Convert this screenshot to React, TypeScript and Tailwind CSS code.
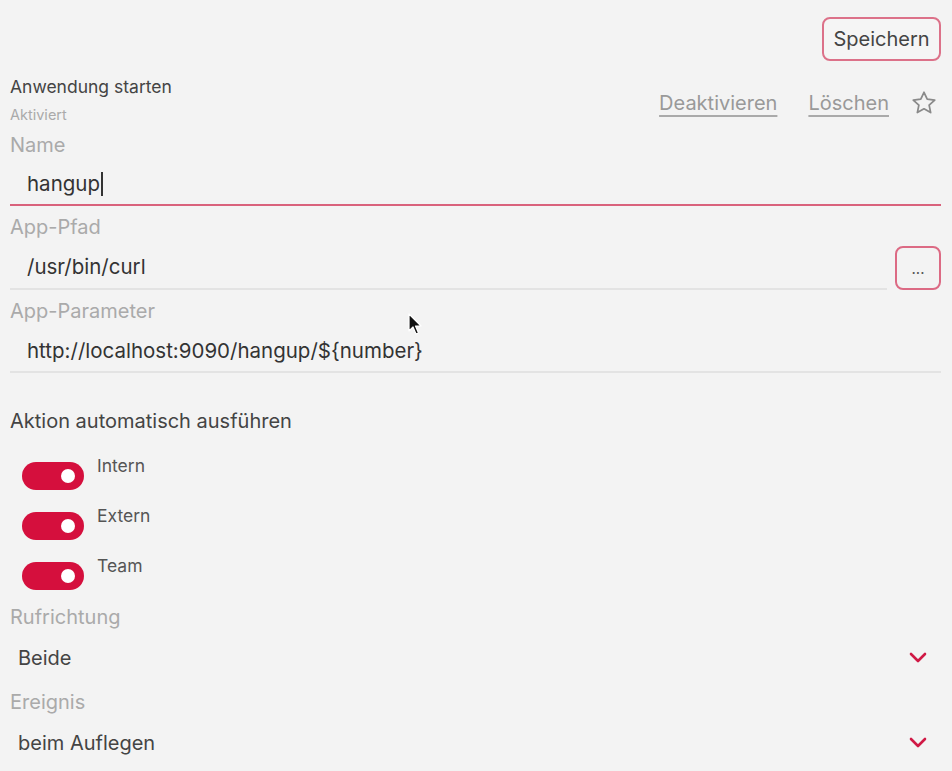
import React from "react";

function Toggle({ label }: { label: string }) {
  return (
    <div className="flex items-start h-[50px]">
      <div className="ml-[12px] mt-[6px] w-[62px] h-[28px] rounded-full bg-[#d50f3d] relative">
        <div className="absolute right-[9px] top-[7px] w-[14px] h-[14px] rounded-full bg-white" />
      </div>
      <div className="ml-[13px] text-[17.5px] leading-[20px] text-[#555]">{label}</div>
    </div>
  );
}

function Chevron() {
  return (
    <svg width="20" height="12" viewBox="0 0 20 12" className="mr-[13px]">
      <path d="M3 2 L10 9 L17 2" fill="none" stroke="#d01945" strokeWidth="2.6" strokeLinecap="round" strokeLinejoin="round" />
    </svg>
  );
}

export default function App() {
  return (
    <div
      className="w-[952px] h-[771px] bg-[#f3f3f3] relative overflow-hidden"
      style={{ fontFamily: "Inter, 'Noto Sans', sans-serif" }}
    >
      <div className="pl-[10px] pr-[11px] pt-[17px]">
        <div className="flex justify-end">
          <button className="h-[44px] w-[119px] border-2 border-[#dc7189] rounded-[8px] text-[20px] text-[#444] bg-[#f5f5f5]">
            Speichern
          </button>
        </div>
        <div className="flex justify-between items-start h-[72px]">
          <div>
            <div className="mt-[16px] text-[17.5px] leading-[20px] text-[#444]">Anwendung starten</div>
            <div className="mt-[10px] text-[14.5px] leading-[16px] text-[#aaa]">Aktiviert</div>
          </div>
          <div className="flex items-center mt-[28px] text-[20px] leading-[24px] text-[#999]">
            <span className="underline underline-offset-[5px] decoration-[#aaa]">Deaktivieren</span>
            <span className="ml-[31px] underline underline-offset-[5px] decoration-[#aaa]">Löschen</span>
            <svg width="28" height="28" viewBox="0 0 24 24" className="ml-[21px] mr-[3px]">
              <path
                d="M12 2.8l2.75 5.9 6.45.75-4.8 4.4 1.3 6.35L12 17l-5.7 3.2 1.3-6.35-4.8-4.4 6.45-.75z"
                fill="none"
                stroke="#8a8a8a"
                strokeWidth="1.5"
                strokeLinejoin="round"
              />
            </svg>
          </div>
        </div>
        {/* Name */}
        <div className="text-[20px] leading-[24px] text-[#aaa]">Name</div>
        <div className="h-[49px] border-b-2 border-[#d9627c] flex items-center pl-[17px] pt-[7px] text-[20.5px] text-[#333]">
          hangup<span className="inline-block w-[1.5px] h-[24px] bg-[#333] ml-[1px]" />
        </div>
        {/* App-Pfad */}
        <div className="mt-[9px] text-[20px] leading-[24px] text-[#aaa]">App-Pfad</div>
        <div className="flex items-end">
          <div className="flex-1 h-[51px] border-b-2 border-[#e3e3e3] flex items-center pl-[17px] pt-[7px] text-[20.5px] text-[#333]">
            /usr/bin/curl
          </div>
          <button className="ml-[8px] w-[46px] h-[44px] border-2 border-[#dc6a84] rounded-[8px] text-[15px] text-[#555] leading-none">
            ...
          </button>
        </div>
        {/* App-Parameter */}
        <div className="mt-[9px] text-[20px] leading-[24px] text-[#aaa]">App-Parameter</div>
        <div className="h-[50px] border-b-2 border-[#e3e3e3] flex items-center pl-[17px] pt-[8px] text-[20.5px] text-[#333]">
          {"http://localhost:9090/hangup/${number}"}
        </div>
        {/* Aktion */}
        <div className="mt-[36px] text-[20px] leading-[24px] text-[#444]">Aktion automatisch ausführen</div>
        <div className="mt-[23px]">
          <Toggle label="Intern" />
          <Toggle label="Extern" />
          <Toggle label="Team" />
        </div>
        {/* Rufrichtung */}
        <div className="mt-[-1px] text-[20px] leading-[24px] text-[#aaa]">Rufrichtung</div>
        <div className="h-[58px] flex items-center justify-between pl-[8px] text-[20px] text-[#444]">
          <span>Beide</span>
          <Chevron />
        </div>
        <div className="mt-[3px] text-[20px] leading-[24px] text-[#aaa]">Ereignis</div>
        <div className="h-[58px] flex items-center justify-between pl-[8px] text-[20px] text-[#444]">
          <span>beim Auflegen</span>
          <Chevron />
        </div>
      </div>
      {/* mouse cursor */}
      <svg width="16" height="24" viewBox="0 0 16 24" className="absolute left-[408px] top-[313px]">
        <path d="M1 1 L1 18 L5 14 L8 21 L10.5 20 L7.5 13 L13 13 Z" fill="#111" stroke="#fff" strokeWidth="1.2" strokeLinejoin="round" />
      </svg>
    </div>
  );
}
